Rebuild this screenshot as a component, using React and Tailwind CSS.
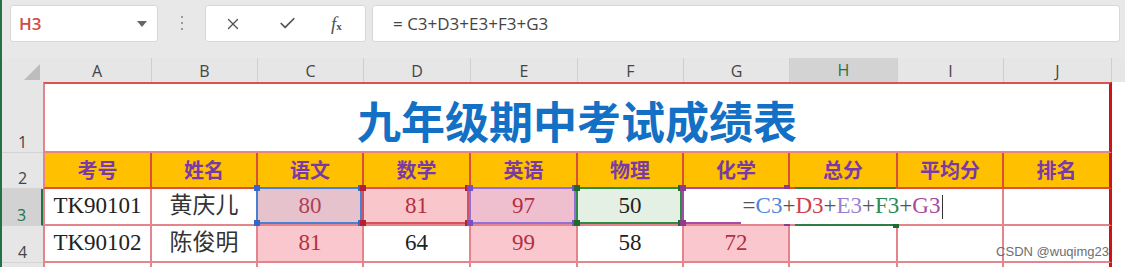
import { X, Check } from 'lucide-react'

const GRID = 'grid grid-cols-[41px_109px_106px_106px_107px_107px_106px_106px_108px_106px_108px_13px]'
const CELL_FONT = "font-['Liberation_Serif','Noto_Sans_CJK_SC',serif] text-[23px]"
const UI_FONT = "font-['Open_Sans','Liberation_Sans',sans-serif]"
const CJK = "font-['Noto_Sans_CJK_SC',sans-serif]"

const letters = ['A', 'B', 'C', 'D', 'E', 'F', 'G', 'H', 'I', 'J']
const heads = ['考号', '姓名', '语文', '数学', '英语', '物理', '化学', '总分', '平均分', '排名']

// grid line colour of the score table
const LINE = 'border-[#e3858b]'
const PINK = 'bg-[#fbc7ce] text-[#b3303e]'
const PLAIN = 'bg-white text-[#222]'

function RowHead({ n, active }) {
  return (
    <div
      className={`flex items-end justify-center pb-[2px] ${UI_FONT} text-[16px] leading-none border-b border-b-[#d4d4d4] ${
        active ? 'bg-[#d2d2d2] text-[#217346] border-r-2 border-r-[#217346]' : 'bg-[#e6e6e6] text-[#444]'
      }`}
    >
      {n}
    </div>
  )
}

function Ref({ line, dot }) {
  return (
    <div className={`pointer-events-none absolute -left-[2px] -top-[2px] right-0 bottom-0 border-2 z-10 ${line}`}>
      <span className={`absolute -left-[4px] -top-[4px] w-[6px] h-[6px] ${dot}`} />
      <span className={`absolute -right-[4px] -top-[4px] w-[6px] h-[6px] ${dot}`} />
      <span className={`absolute -left-[4px] -bottom-[4px] w-[6px] h-[6px] ${dot}`} />
      <span className={`absolute -right-[4px] -bottom-[4px] w-[6px] h-[6px] ${dot}`} />
    </div>
  )
}

function cellCls(i, extra) {
  let c = `relative flex items-center justify-center border-r-2 border-b-2 ${LINE} ${CELL_FONT}`
  if (i === 0) c += ' border-l-2'
  if (i === 9) c += ' border-r-[3px] border-r-[#cc1414]'
  return c + ' ' + extra
}

function Formula() {
  return (
    <span className="relative z-20 self-stretch flex items-center bg-white whitespace-nowrap px-[2px]">
      <span className="text-[#555]">=</span>
      <span className="text-[#4f86d9]">C3</span>
      <span className="text-[#555]">+</span>
      <span className="text-[#cf3f4c]">D3</span>
      <span className="text-[#555]">+</span>
      <span className="text-[#9b80d2]">E3</span>
      <span className="text-[#555]">+</span>
      <span className="text-[#2b8a4f]">F3</span>
      <span className="text-[#555]">+</span>
      <span className="text-[#a8489e]">G3</span>
      <span className="ml-[2px] w-[1px] h-[24px] bg-[#333]" />
    </span>
  )
}

export default function App() {
  const row3 = [
    { v: 'TK90101', cls: PLAIN },
    { v: '黄庆儿', cls: 'bg-white text-[#333]' },
    { v: '80', cls: 'bg-[#e6c2cd] text-[#ad3f56]', ref: ['border-[#4a7fd6]', 'bg-[#3567c8]'] },
    { v: '81', cls: 'bg-[#f9c6cc] text-[#b3303e]', ref: ['border-[#d4515f]', 'bg-[#b3202f]'] },
    { v: '97', cls: 'bg-[#efbfd0] text-[#b3303e]', ref: ['border-[#9470d6]', 'bg-[#7a4fc2]'] },
    { v: '50', cls: 'bg-[#e3f0e3] text-[#222]', ref: ['border-[#2e8b46]', 'bg-[#1e6b30]'] },
    { v: '', cls: 'bg-white', ref: ['border-[#a64ca6]', 'bg-[#8e3a8e]'] },
    { v: 'formula', cls: 'bg-white overflow-visible' },
    { v: '', cls: 'bg-white' },
    { v: '', cls: 'bg-white' },
  ]
  const row4 = [
    { v: 'TK90102', cls: PLAIN },
    { v: '陈俊明', cls: 'bg-white text-[#333]' },
    { v: '81', cls: PINK },
    { v: '64', cls: PLAIN },
    { v: '99', cls: PINK },
    { v: '58', cls: PLAIN },
    { v: '72', cls: PINK },
    { v: '', cls: 'bg-white' },
    { v: '', cls: 'bg-white' },
    { v: '', cls: 'bg-white' },
  ]

  return (
    <div className="relative w-[1125px] h-[267px] overflow-hidden flex bg-[#e8e8e8]">
      <div className="w-[2px] shrink-0 bg-[#217346]" />
      <div className="flex flex-col w-[1123px]">
        {/* name box + formula bar */}
        <div className="h-[58px] flex items-start pt-[5px] shrink-0">
          <div className="ml-[8px] w-[148px] h-[37px] bg-white rounded-[3px] border border-[#d8d8d8] flex items-center justify-between pl-[8px] pr-[10px]">
            <span className={`${UI_FONT} text-[17px] font-semibold text-[#cf4b4b]`}>H3</span>
            <svg width="10" height="6" viewBox="0 0 10 6">
              <polygon points="0,0 10,0 5,6" fill="#666" />
            </svg>
          </div>
          <div className="ml-[23px] mt-[11px] flex flex-col gap-[4px]">
            <span className="w-[2px] h-[2px] bg-[#9a9a9a]" />
            <span className="w-[2px] h-[2px] bg-[#9a9a9a]" />
            <span className="w-[2px] h-[2px] bg-[#9a9a9a]" />
          </div>
          <div className="ml-[22px] w-[161px] h-[37px] bg-white rounded-[3px] border border-[#d8d8d8] flex items-center pl-[18px] text-[#555]">
            <X size={18} strokeWidth={1.8} />
            <Check size={19} strokeWidth={2.2} className="ml-[36px]" />
            <span className="ml-[34px] font-['Liberation_Serif',serif] italic text-[19px] leading-none text-[#555]">
              f<span className="text-[11px] not-italic font-bold">x</span>
            </span>
          </div>
          <div className={`ml-[6px] w-[748px] h-[37px] bg-white rounded-[3px] border border-[#d8d8d8] flex items-center pl-[20px] ${UI_FONT} text-[17px] text-[#444]`}>
            = C3+D3+E3+F3+G3
          </div>
        </div>

        {/* column headers */}
        <div className={`${GRID} h-[24px] shrink-0 bg-[#e6e6e6]`}>
          <div className="relative">
            <svg className="absolute right-[3px] bottom-[4px]" width="16" height="16" viewBox="0 0 16 16">
              <polygon points="16,0 16,16 0,16" fill="#bdbdbd" />
            </svg>
          </div>
          {letters.map((l) => (
            <div
              key={l}
              className={`flex items-center justify-center ${UI_FONT} text-[16px] border-r border-[#cfcfcf] ${
                l === 'H' ? 'bg-[#d3d3d3] text-[#217346] border-b-2 border-b-[#217346]' : 'text-[#444]'
              }`}
            >
              {l}
            </div>
          ))}
          <div />
        </div>

        {/* row 1: title */}
        <div className={`${GRID} h-[71px] shrink-0`}>
          <RowHead n="1" />
          <div className={`col-span-10 flex items-center justify-center pt-[4px] bg-white border-t-2 border-t-[#d9534f] border-l-2 border-b-2 ${LINE} border-r-[3px] border-r-[#cc1414]`}>
            <span className={`${CJK} text-[44px] font-bold text-[#1470c4] leading-none`}>九年级期中考试成绩表</span>
          </div>
          <div className="bg-white" />
        </div>

        {/* row 2: heads */}
        <div className={`${GRID} h-[36px] shrink-0`}>
          <RowHead n="2" />
          {heads.map((h, i) => (
            <div
              key={h}
              className={`flex items-center justify-center bg-[#ffc000] ${CJK} text-[20px] font-bold text-[#7a3aa6] border-r-2 border-b-2 border-[#d9503a] ${
                i === 0 ? 'border-l-2 border-l-[#e3858b]' : ''
              } ${i === 9 ? 'border-r-[3px] border-r-[#cc1414]' : ''}`}
            >
              {h}
            </div>
          ))}
          <div className="bg-white" />
        </div>

        {/* row 3 */}
        <div className={`${GRID} h-[37px] shrink-0`}>
          <RowHead n="3" active />
          {row3.map((c, i) => (
            <div key={i} className={cellCls(i, c.cls)}>
              {c.v === 'formula' ? (
                <>
                  <Formula />
                  <div className="pointer-events-none absolute -top-[2px] -bottom-[2px] left-[5px] right-0 border-t-2 border-b-2 border-[#2e7d46] z-10">
                    <span className="absolute -right-[3px] -bottom-[4px] w-[6px] h-[6px] bg-[#1e6b30]" />
                  </div>
                </>
              ) : (
                c.v
              )}
              {c.ref && <Ref line={c.ref[0]} dot={c.ref[1]} />}
            </div>
          ))}
          <div className="bg-white" />
        </div>

        {/* row 4 */}
        <div className={`${GRID} h-[37px] shrink-0`}>
          <RowHead n="4" />
          {row4.map((c, i) => (
            <div key={i} className={cellCls(i, c.cls)}>
              {c.v}
            </div>
          ))}
          <div className="bg-white" />
        </div>

        {/* row 5 (cut off) */}
        <div className={`${GRID} h-[12px] shrink-0`}>
          <RowHead n="" />
          {letters.map((l, i) => (
            <div
              key={l}
              className={`bg-white border-r-2 ${LINE} ${i === 0 ? 'border-l-2' : ''} ${i === 9 ? 'border-r-[3px] border-r-[#cc1414]' : ''}`}
            />
          ))}
          <div className="bg-white" />
        </div>
      </div>

      <div className="absolute right-[16px] bottom-[9px] font-['Liberation_Sans',sans-serif] text-[13px] leading-none text-[#6e6e6e]">
        CSDN @wuqimg23
      </div>
    </div>
  )
}
